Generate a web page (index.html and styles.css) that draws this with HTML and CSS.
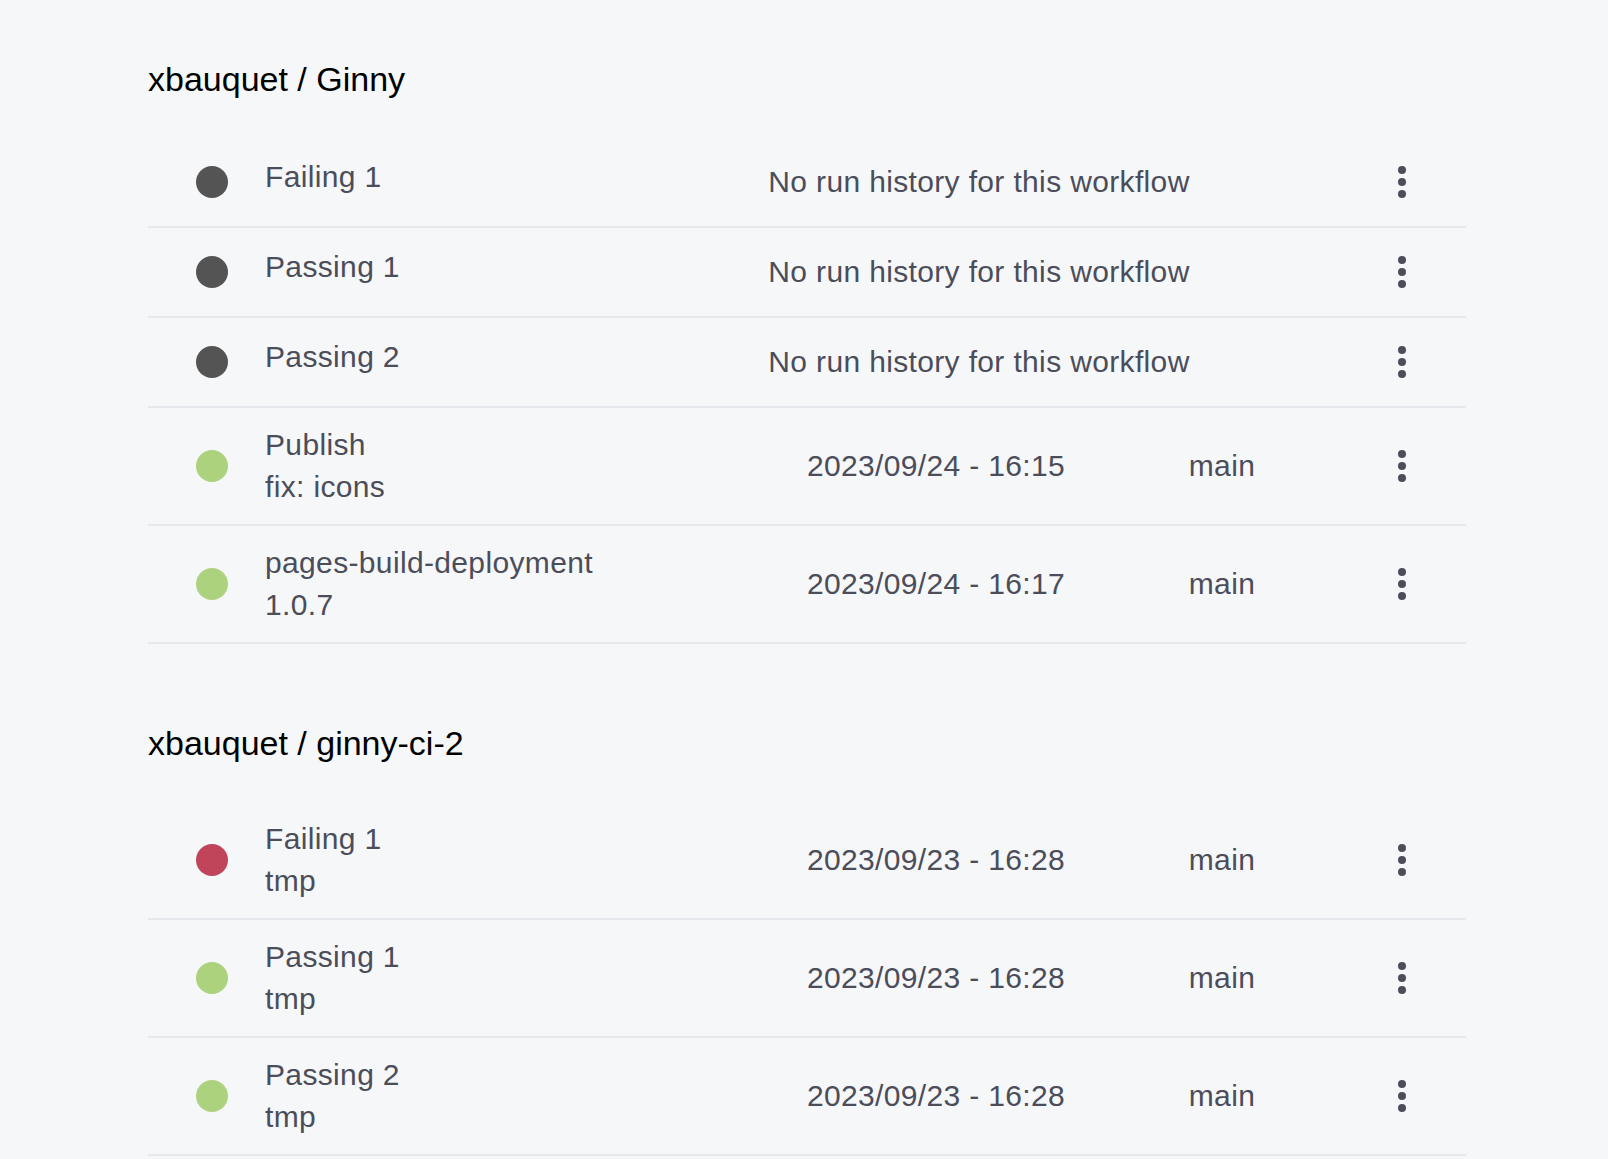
FILE: index.html
```html
<!DOCTYPE html>
<html lang="en">
<head>
<meta charset="utf-8">
<title>Workflows</title>
<link rel="stylesheet" href="styles.css">
</head>
<body>
<main class="page">
  <section class="repo">
    <h2 class="repo-title">xbauquet / Ginny</h2>
    <div class="list">
      <div class="row">
        <span class="dot dot-none"></span>
        <div class="name single"><div class="title">Failing 1</div><div class="sub"></div></div>
        <div class="empty">No run history for this workflow</div>
        <svg class="kebab" width="8" height="32" viewBox="0 0 8 32"><circle cx="4" cy="4" r="4"/><circle cx="4" cy="16" r="4"/><circle cx="4" cy="28" r="4"/></svg>
      </div>
      <div class="row">
        <span class="dot dot-none"></span>
        <div class="name single"><div class="title">Passing 1</div><div class="sub"></div></div>
        <div class="empty">No run history for this workflow</div>
        <svg class="kebab" width="8" height="32" viewBox="0 0 8 32"><circle cx="4" cy="4" r="4"/><circle cx="4" cy="16" r="4"/><circle cx="4" cy="28" r="4"/></svg>
      </div>
      <div class="row">
        <span class="dot dot-none"></span>
        <div class="name single"><div class="title">Passing 2</div><div class="sub"></div></div>
        <div class="empty">No run history for this workflow</div>
        <svg class="kebab" width="8" height="32" viewBox="0 0 8 32"><circle cx="4" cy="4" r="4"/><circle cx="4" cy="16" r="4"/><circle cx="4" cy="28" r="4"/></svg>
      </div>
      <div class="row">
        <span class="dot dot-ok"></span>
        <div class="name"><div class="title">Publish</div><div class="sub">fix: icons</div></div>
        <div class="date">2023/09/24 - 16:15</div>
        <div class="branch">main</div>
        <svg class="kebab" width="8" height="32" viewBox="0 0 8 32"><circle cx="4" cy="4" r="4"/><circle cx="4" cy="16" r="4"/><circle cx="4" cy="28" r="4"/></svg>
      </div>
      <div class="row">
        <span class="dot dot-ok"></span>
        <div class="name"><div class="title">pages-build-deployment</div><div class="sub">1.0.7</div></div>
        <div class="date">2023/09/24 - 16:17</div>
        <div class="branch">main</div>
        <svg class="kebab" width="8" height="32" viewBox="0 0 8 32"><circle cx="4" cy="4" r="4"/><circle cx="4" cy="16" r="4"/><circle cx="4" cy="28" r="4"/></svg>
      </div>
    </div>
  </section>

  <section class="repo">
    <h2 class="repo-title">xbauquet / ginny-ci-2</h2>
    <div class="list">
      <div class="row">
        <span class="dot dot-fail"></span>
        <div class="name"><div class="title">Failing 1</div><div class="sub">tmp</div></div>
        <div class="date">2023/09/23 - 16:28</div>
        <div class="branch">main</div>
        <svg class="kebab" width="8" height="32" viewBox="0 0 8 32"><circle cx="4" cy="4" r="4"/><circle cx="4" cy="16" r="4"/><circle cx="4" cy="28" r="4"/></svg>
      </div>
      <div class="row">
        <span class="dot dot-ok"></span>
        <div class="name"><div class="title">Passing 1</div><div class="sub">tmp</div></div>
        <div class="date">2023/09/23 - 16:28</div>
        <div class="branch">main</div>
        <svg class="kebab" width="8" height="32" viewBox="0 0 8 32"><circle cx="4" cy="4" r="4"/><circle cx="4" cy="16" r="4"/><circle cx="4" cy="28" r="4"/></svg>
      </div>
      <div class="row">
        <span class="dot dot-ok"></span>
        <div class="name"><div class="title">Passing 2</div><div class="sub">tmp</div></div>
        <div class="date">2023/09/23 - 16:28</div>
        <div class="branch">main</div>
        <svg class="kebab" width="8" height="32" viewBox="0 0 8 32"><circle cx="4" cy="4" r="4"/><circle cx="4" cy="16" r="4"/><circle cx="4" cy="28" r="4"/></svg>
      </div>
    </div>
  </section>
</main>
</body>
</html>
```

FILE: styles.css
```css
html, body {
  margin: 0;
  padding: 0;
  background: #f6f7f9;
}

body {
  font-family: "Liberation Sans", Arial, Helvetica, sans-serif;
  color: #4b4d5a;
}

.page {
  width: 1318px;
  margin-left: 148px;
  padding-top: 59px;
}

.repo + .repo {
  margin-top: 79px;
}

.repo-title {
  margin: 0 0 39px 0;
  font-size: 34px;
  line-height: 40px;
  font-weight: 400;
  color: #000;
}

.row {
  display: grid;
  grid-template-columns: 117px 428px 486px 86px 201px;
  align-items: center;
  padding: 16px 0;
  border-bottom: 2px solid #e7e8ed;
  font-size: 30px;
  line-height: 42px;
  letter-spacing: 0.35px;
}

.dot {
  width: 32px;
  height: 32px;
  border-radius: 50%;
  margin-left: 48px;
}

.dot-none { background: #545454; }
.dot-ok { background: #add27d; }
.dot-fail { background: #c0455b; }

.name {
  white-space: nowrap;
}

.name .sub {
  min-height: 42px;
}

.name.single {
  padding-top: 2px;
}

.name.single .sub {
  min-height: 12px;
}

.empty {
  grid-column: span 2;
  text-align: center;
  white-space: nowrap;
}

.date,
.branch {
  text-align: center;
  white-space: nowrap;
}

.kebab {
  justify-self: end;
  margin-right: 60px;
  fill: #4b4d5a;
  display: block;
}
```
